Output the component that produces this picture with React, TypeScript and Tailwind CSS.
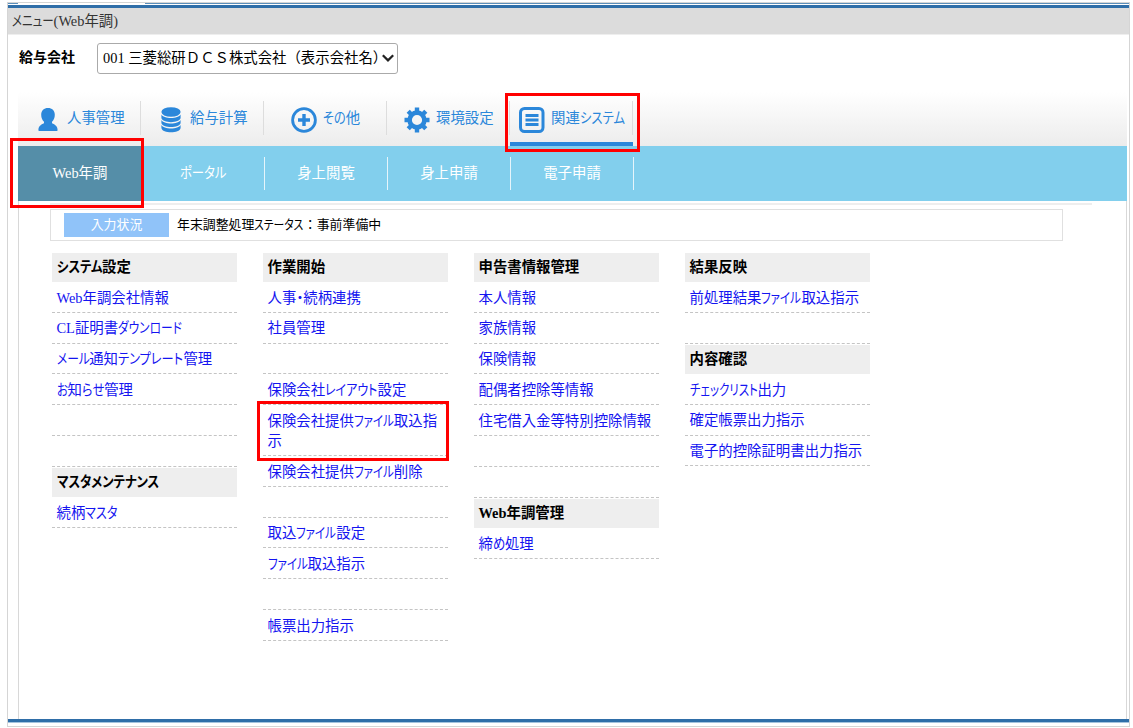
import { useLayoutEffect, useRef, useState } from 'react';
import clsx from 'clsx';

type Item = { text: string; kana?: number };
type Section = { title: string; kana?: number; items: Item[] };

const blank: Item = { text: '' };

const columns: Section[][] = [
  [
    {
      title: 'システム設定',
      kana: 11.4,
      items: [
        { text: 'Web年調会社情報' },
        { text: 'CL証明書ダウンロード', kana: 10.7 },
        { text: 'メール通知テンプレート管理', kana: 10.9 },
        { text: 'お知らせ管理', kana: 11.1 },
        blank,
        blank,
      ],
    },
    { title: 'マスタメンテナンス', kana: 11.4, items: [{ text: '続柄マスタ', kana: 10.7 }] },
  ],
  [
    {
      title: '作業開始',
      items: [
        { text: '人事・続柄連携', kana: 7 },
        { text: '社員管理' },
        blank,
        { text: '保険会社レイアウト設定', kana: 10.5 },
        { text: '保険会社提供ファイル取込指\n示', kana: 10 },
        { text: '保険会社提供ファイル削除', kana: 10 },
        blank,
        { text: '取込ファイル設定', kana: 10 },
        { text: 'ファイル取込指示', kana: 10 },
        blank,
        { text: '帳票出力指示' },
      ],
    },
  ],
  [
    {
      title: '申告書情報管理',
      items: [
        { text: '本人情報' },
        { text: '家族情報' },
        { text: '保険情報' },
        { text: '配偶者控除等情報' },
        { text: '住宅借入金等特別控除情報' },
        blank,
        blank,
      ],
    },
    { title: 'Web年調管理', items: [{ text: '締め処理', kana: 12 }] },
  ],
  [
    { title: '結果反映', items: [{ text: '前処理結果ファイル取込指示', kana: 10 }, blank] },
    {
      title: '内容確認',
      items: [
        { text: 'チェックリスト出力', kana: 9.7 },
        { text: '確定帳票出力指示' },
        { text: '電子的控除証明書出力指示' },
      ],
    },
  ],
];

const KanaRun = ({ text, size }: { text: string; size: number }) => {
  const ref = useRef<HTMLSpanElement>(null);
  const [scale, setScale] = useState(1);
  const width = text.length * size;

  useLayoutEffect(() => {
    if (ref.current) setScale(width / ref.current.offsetWidth);
  }, [width]);

  return (
    <span className="inline-block whitespace-nowrap" style={{ width }}>
      <span
        ref={ref}
        className="inline-block origin-left [font-feature-settings:'palt']"
        style={{ transform: `scaleX(${scale})` }}
      >
        {text}
      </span>
    </span>
  );
};

const Label = ({ text, kana = 11 }: Item) => (
  <>
    {text.split(/([ぁ-んァ-ヶー・]+|\n)/).map((part, i) => {
      if (part === '\n') return <br key={i} />;
      return i % 2 === 1 ? <KanaRun key={i} text={part} size={kana} /> : part;
    })}
  </>
);

const PersonIcon = () => (
  <svg className="h-6 w-5" viewBox="0 0 20 24" fill="#2b87da">
    <path d="M10 0C6 0 3.200 2.600 3.200 6.800c0 3 1.100 5.400 2.800 7v1.400C3 16.400.4 18 .4 22.200q0 .8.8.8h17.600q.8 0 .8-.8c0-4.200-2.600-5.800-5.600-7v-1.400c1.700-1.600 2.800-4 2.800-7C16.800 2.600 14 0 10 0z" />
  </svg>
);

const DatabaseIcon = () => (
  <svg className="h-[26px] w-5" viewBox="0 0 20 26" fill="#2b87da">
    <ellipse cx="10" cy="5" rx="9.600" ry="4.800" />
    <path d="M.4 7.500c2 4.600 17.200 4.600 19.200 0v3.600c-1 5.400-18.200 5.400-19.200 0z" />
    <path d="M.4 13c2 4.600 17.200 4.600 19.200 0v3c-1 5.400-18.200 5.400-19.200 0z" />
    <path d="M.4 18c2 4.600 17.200 4.600 19.200 0v3c-1 5.800-18.200 5.800-19.200 0z" />
  </svg>
);

const PlusIcon = () => (
  <svg className="h-[26px] w-[26px]" viewBox="0 0 26 26" fill="none" stroke="#2b87da">
    <circle cx="13" cy="13" r="11.400" strokeWidth="2.800" />
    <path d="M13 7v12M7 13h12" strokeWidth="3.400" />
  </svg>
);

const GearIcon = () => (
  <svg className="h-[26px] w-[26px]" viewBox="0 0 26 26" fill="none" stroke="#2b87da">
    <circle cx="13" cy="13" r="7.400" strokeWidth="4.600" />
    <path
      d="M13 .5v4M13 21.500v4M.5 13h4M21.500 13h4M4.200 4.200l3 3M18.800 18.800l3 3M4.200 21.800l3-3M18.800 7.200l3-3"
      strokeWidth="4.400"
    />
  </svg>
);

const ListIcon = () => (
  <svg className="h-[26px] w-[26px]" viewBox="0 0 26 26" fill="none" stroke="#2b87da">
    <rect x="1.500" y="1.500" width="22.500" height="23" rx="4" strokeWidth="3" />
    <path d="M6.500 8.500h13M6.500 13h13M6.500 17.500h13" strokeWidth="2.800" />
  </svg>
);

const tabs = [
  { text: '人事管理', icon: <PersonIcon />, style: 'pl-5 gap-[9px]' },
  { text: '給与計算', icon: <DatabaseIcon />, style: 'pl-5 gap-[9px]' },
  { text: 'その他', icon: <PlusIcon />, style: 'pl-[27px] gap-[6px]', kana: 11.4 },
  { text: '環境設定', icon: <GearIcon />, style: 'pl-[17px] gap-[6px]' },
  { text: '関連システム', icon: <ListIcon />, style: 'pl-[9px] gap-[6px]', kana: 11.2, active: true },
];

const subTabs = [
  { text: 'Web年調', active: true },
  { text: 'ポータル', kana: 11.6 },
  { text: '身上閲覧' },
  { text: '身上申請' },
  { text: '電子申請' },
];

const App = () => {
  return (
    <div className="relative h-[728px] w-[1133px] overflow-hidden bg-white pt-0.5 pl-[7px] font-['Liberation_Serif','Noto_Sans_CJK_JP',serif] text-[14.4px]">
      <div className="flex h-[725px] w-[1123px] flex-col border border-[#d5d5d5]">
        {/* Window top lines */}
        <div className="flex h-px shrink-0 justify-between">
          <div className="w-2.5 bg-[#5b8fbb]" />
          <div className="w-[984px] bg-[#5b8fbb]" />
        </div>
        <div className="mt-px h-[3px] shrink-0 bg-[#2f6ea8]" />
        <header className="h-[27px] shrink-0 border-b border-[#eee] bg-[#dcdcdc] pl-1 leading-[26px] text-[#333]">
          <Label text="メニュー(Web年調)" kana={10.4} />
        </header>

        {/* Company select */}
        <div className="flex h-[57px] shrink-0 items-start pt-2 pl-[11px]">
          <span className="w-[78px] pt-[5px] text-[14px] leading-5 font-bold">給与会社</span>
          <button className="flex h-[31px] w-[301px] items-center justify-between rounded-[3px] border border-[#aaa] pt-px pr-[3px] pl-[5px] whitespace-nowrap">
            <span>001 三菱総研ＤＣＳ株式会社（表示会社名）</span>
            <svg className="-ml-3 h-3 w-3 shrink-0" viewBox="0 0 12 12" fill="none" stroke="#222" strokeWidth="2.200">
              <path d="M.8 2.200L6 7.400l5.200-5.200" />
            </svg>
          </button>
        </div>

        <main className="mr-0.5 ml-2.5 flex grow flex-col">
          <nav className="flex h-[54px] shrink-0 bg-linear-to-b from-white to-[#ececec]">
            {tabs.map((tab) => (
              <a
                key={tab.text}
                href="#"
                className="flex w-[123px] flex-col justify-end whitespace-nowrap text-[#2b87da]"
              >
                <div className={clsx('mb-[7px] flex h-[34px] items-center border-r border-[#ddd]', tab.style)}>
                  <span className="shrink-0 pt-1">{tab.icon}</span>
                  <span className="pt-px">
                    <Label text={tab.text} kana={tab.kana} />
                  </span>
                </div>
                <div className={clsx('h-1 shrink-0', tab.active && 'bg-[#2b87da]')} />
              </a>
            ))}
          </nav>

          <nav className="flex h-[55px] shrink-0 items-center bg-[#82cfed] text-white">
            {subTabs.map((tab) => (
              <a
                key={tab.text}
                href="#"
                className={clsx(
                  'flex shrink-0 items-center justify-center',
                  tab.active
                    ? 'h-full w-[124px] bg-[#558ea8]'
                    : 'h-[33px] w-[123px] border-r border-white/80'
                )}
              >
                <span>
                  <Label text={tab.text} kana={tab.kana} />
                </span>
              </a>
            ))}
          </nav>

          <div className="grow border-r border-l border-[#d8d8d8] pt-0.5 pl-[31px]">
            <div className="h-0.5 w-[1042px] bg-[#eee]" />
            <div className="mt-1 flex h-8 w-[1013px] items-center border border-[#e0e0e0] pl-[13px] text-[12.9px]">
              <div className="mr-2 h-6 w-[105px] bg-[#90c3f9] text-center leading-[24px] text-white">入力状況</div>
              <span className="pt-px">
                <Label text="年末調整処理ステータス：事前準備中" kana={9.9} />
              </span>
            </div>

            {/* Menu */}
            <div className="mt-[10.5px] ml-0.5 flex gap-[26px]">
              {columns.map((sections, i) => (
                <div key={i} className="w-[185px]">
                  {sections.map((section) => (
                    <section key={section.title}>
                      <h2 className="mt-[1.5px] h-[29px] bg-[#eee] pl-[4.5px] leading-[29px] font-bold">
                        <Label text={section.title} kana={section.kana} />
                      </h2>
                      <ul>
                        {section.items.map((item, j) => (
                          <li
                            key={j}
                            className="min-h-[30.8px] border-b border-dashed border-[#c4c4c4] pt-[5.6px] pb-[4.2px] pl-[4.5px] leading-5 text-[#1414f0]"
                          >
                            {item.text && (
                              <a href="#">
                                <Label {...item} />
                              </a>
                            )}
                          </li>
                        ))}
                      </ul>
                    </section>
                  ))}
                </div>
              ))}
            </div>
          </div>
        </main>

        <div className="h-[3px] shrink-0 bg-[#2f6ea8]" />
        <div className="mb-[3px] h-px shrink-0 bg-[#a5c3dd]" />
      </div>

      {/* Highlight frames */}
      <div className="absolute top-[138px] left-[10px] h-[70px] w-[134px] border-3 border-[#f00]" />
      <div className="absolute top-[93px] left-[505px] h-[59px] w-[135px] border-3 border-[#f00]" />
      <div className="absolute top-[401px] left-[257px] h-[60px] w-[192px] border-3 border-[#f00]" />
    </div>
  );
};

export default App;
